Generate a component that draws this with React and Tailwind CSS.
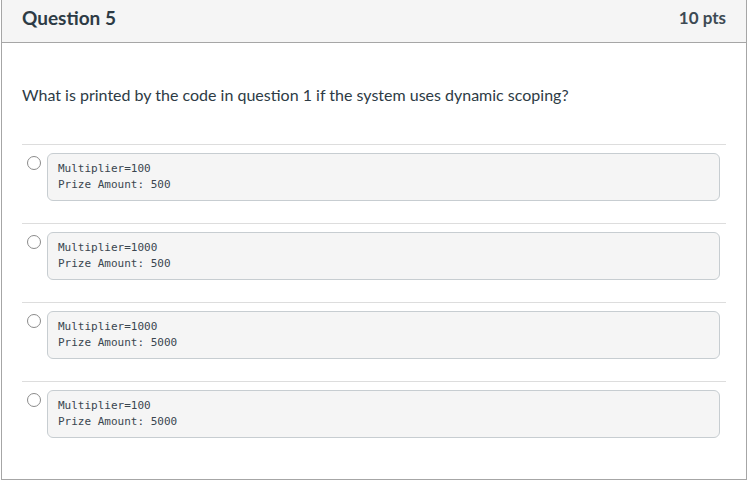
const answers = [
  ["Multiplier=100", "Prize Amount: 500"],
  ["Multiplier=1000", "Prize Amount: 500"],
  ["Multiplier=1000", "Prize Amount: 5000"],
  ["Multiplier=100", "Prize Amount: 5000"],
];

function Answer({ lines }) {
  return (
    <div className="flex border-t border-[#dddddd] pt-2 pb-[22px]">
      <div className="ml-[5px] mt-[3px] h-[14px] w-[14px] shrink-0 rounded-full border border-[#8b8b8b] bg-white" />
      <div className="ml-[6px] mr-[6px] flex-1 rounded-[6px] border border-[#c7cdd1] bg-[#f5f5f5] px-[10px] pt-[7px] pb-[7px] font-['DejaVu_Sans_Mono',monospace] text-[11px] leading-4 text-[#3a4650] whitespace-pre">
        {lines.map((l) => (
          <div key={l}>{l}</div>
        ))}
      </div>
    </div>
  );
}

export default function App() {
  return (
    <div className="h-[484px] w-[749px] bg-white font-['Lato',sans-serif] text-[#2d3b45]">
      <div className="ml-px h-[480px] w-[746px] border-x border-b border-[#a6a6a6]">
        <div className="flex h-[43px] items-center justify-between border-b border-[#a6a6a6] bg-[#f5f5f5] px-5 pb-[6px]">
          <h2 className="text-[19px] font-bold">Question 5</h2>
          <span className="text-[17px] font-bold text-[#3d4a54]">10 pts</span>
        </div>

        <div className="px-5">
          <p className="mt-10 mb-[37px] text-[16px] leading-6">
            What is printed by the code in question 1 if the system uses dynamic scoping?
          </p>
          {answers.map((a, i) => (
            <Answer key={i} lines={a} />
          ))}
        </div>
      </div>
    </div>
  );
}
